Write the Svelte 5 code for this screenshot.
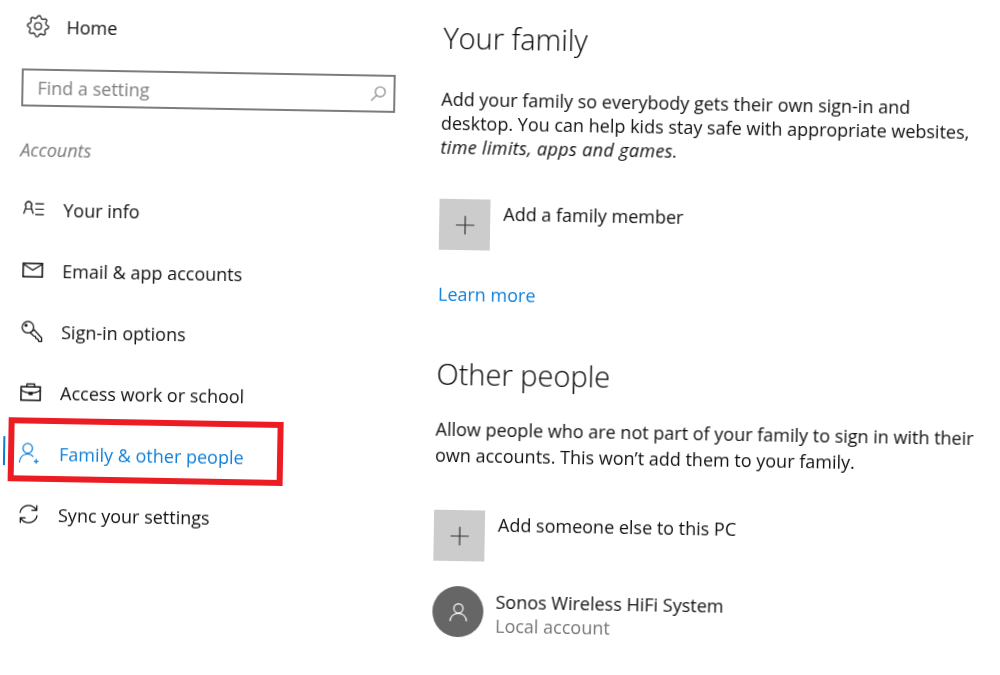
<script>
	const items = [
		{ id: 'info', label: 'Your info' },
		{ id: 'mail', label: 'Email & app accounts' },
		{ id: 'key', label: 'Sign-in options' },
		{ id: 'work', label: 'Access work or school' },
		{ id: 'family', label: 'Family & other people', active: true },
		{ id: 'sync', label: 'Sync your settings' }
	];

	// gear teeth, worked out once rather than hand-plotting 16 points
	const gear = Array.from({ length: 32 }, (_, i) => {
		const a = (i * Math.PI) / 16;
		const r = [11, 11, 8.6, 8.6][i % 4];
		return `${(12 + r * Math.cos(a)).toFixed(2)},${(12 + r * Math.sin(a)).toFixed(2)}`;
	}).join(' ');
</script>

{#snippet navIcon(id)}
	<svg class="icon" viewBox="0 0 24 24" fill="none" stroke="currentColor" stroke-width="1.3">
		{#if id === 'info'}
			<path d="M4 9.500a3.200 3.200 0 1 1 5 0L11.500 17M4 9.500L1.500 17M4 12h5" />
			<path d="M13.500 6.500h9M13.500 12h9M13.500 17.500h9" />
		{:else if id === 'mail'}
			<rect x="2" y="5" width="20" height="14" stroke-width="1.600" />
			<path d="M2.500 6l9.500 6 9.500-6" />
		{:else if id === 'key'}
			<circle cx="8" cy="8" r="6" />
			<circle cx="6" cy="6" r="1" fill="currentColor" />
			<path d="M12.500 12l2-1.500 8 8.500v3.500h-3l-1-2.500-2-.5-.5-2-2-.5-3.500-3.500" />
		{:else if id === 'work'}
			<rect x="2" y="6.500" width="20" height="14" stroke-width="1.600" />
			<path d="M8 6.500V3.500h8v3M2 10c5 4 15 4 20 0" />
			<rect x="10.500" y="12.500" width="3" height="2" fill="currentColor" />
		{:else if id === 'family'}
			<circle cx="10" cy="7" r="5" />
			<path d="M1.500 22c.5-5.500 4-9 8.500-9 2.500 0 4.500 1 6 2.800M19 18v5M16.500 20.500h5" />
		{:else}
			<path d="M3 11c.5-5 4.500-8 9-8 3.500 0 6 1.500 8 4.500M20.500 2.500v5.500h-5.500" />
			<path d="M21 13c-.5 5-4.500 8-9 8-3.500 0-6-1.500-8-4.500M3.500 21.500v-5.500h5.500" />
		{/if}
	</svg>
{/snippet}

<div class="page">
	<aside class="side">
		<div class="home">
			<svg class="icon" viewBox="0 0 24 24" fill="none" stroke="currentColor" stroke-width="1.200">
				<circle cx="12" cy="12" r="3.600" />
				<polygon points={gear} stroke-linejoin="round" />
			</svg>
			<span>Home</span>
		</div>

		<div class="search">
			<span>Find a setting</span>
			<svg viewBox="0 0 20 20" fill="none" stroke="currentColor" stroke-width="1.300">
				<circle cx="12" cy="8" r="5.500" />
				<path d="M8 12l-6 6" />
			</svg>
		</div>

		<div class="section">Accounts</div>

		<nav>
			{#each items as item}
				<div class="row" class:active={item.active}>
					{@render navIcon(item.id)}
					<span>{item.label}</span>
					{#if item.active}
						<i class="bar"></i>
						<i class="mark"></i>
					{/if}
				</div>
			{/each}
		</nav>
	</aside>

	<main class="content">
		<h2 class="family">Your family</h2>
		<p class="intro">
			Add your family so everybody gets their own sign-in and<br />
			desktop. You can help kids stay safe with appropriate websites,<br />
			<em>time limits, apps and games.</em>
		</p>
		<div class="add first">
			<div class="square">
				<svg viewBox="0 0 24 24" stroke="currentColor" stroke-width="1.300"><path d="M12 2v20M2 12h20" /></svg>
			</div>
			<span>Add a family member</span>
		</div>
		<div class="link">Learn more</div>

		<h2 class="other">Other people</h2>
		<p class="allow">
			Allow people who are not part of your family to sign in with their<br />
			own accounts. This won’t add them to your family.
		</p>
		<div class="add second">
			<div class="square">
				<svg viewBox="0 0 24 24" stroke="currentColor" stroke-width="1.300"><path d="M12 2v20M2 12h20" /></svg>
			</div>
			<span>Add someone else to this PC</span>
		</div>
		<div class="person">
			<div class="avatar">
				<svg viewBox="0 0 24 24" fill="none" stroke="currentColor" stroke-width="1.500">
					<circle cx="12" cy="8" r="5" />
					<path d="M3 22c.5-5 4-8.500 9-8.500s8.500 3.500 9 8.500" />
				</svg>
			</div>
			<div class="who">
				<div>Sonos Wireless HiFi System</div>
				<div class="sub">Local account</div>
			</div>
		</div>
	</main>
</div>

<style>
	:global(body) {
		background: #fff;
		overflow: hidden;
	}

	/* the source capture is tilted about a degree */
	.page {
		display: flex;
		width: 1000px;
		height: 675px;
		transform: rotate(1deg);
		transform-origin: 0 0;
		font-family: 'Open Sans', 'Noto Sans', sans-serif;
		font-size: 18px;
		color: #111;
		filter: blur(0.35px);
	}

	.side {
		width: 443px;
		flex: none;
		box-sizing: border-box;
		padding: 12px 0 0 23px;
	}

	.icon {
		width: 23px;
		height: 23px;
		flex: none;
	}

	.home {
		display: flex;
		align-items: center;
		gap: 17px;
		height: 27px;
		padding-left: 4px;
	}

	.search {
		display: flex;
		align-items: center;
		justify-content: space-between;
		box-sizing: border-box;
		width: 374px;
		height: 38px;
		margin-top: 29px;
		padding: 0 6px 0 14px;
		border: 2px solid #7c7c7c;
		color: #7d7d7d;
	}

	.search svg {
		width: 18px;
		height: 18px;
	}

	.section {
		margin-top: 31px;
		font-style: italic;
		color: #777;
	}

	nav {
		margin-top: 17px;
	}

	.row {
		position: relative;
		display: flex;
		align-items: center;
		gap: 18px;
		height: 61px;
		margin-left: 3px;
	}

	.row.active {
		color: #0f7fd8;
	}

	.bar {
		position: absolute;
		left: -15px;
		top: 14px;
		width: 2px;
		height: 29px;
		background: #0f78d4;
	}

	.mark {
		position: absolute;
		left: -10px;
		top: -5px;
		width: 275px;
		height: 64px;
		box-sizing: border-box;
		border: 6px solid #ec1c24;
	}

	.content {
		flex: 1;
		padding-top: 10px;
	}

	h2 {
		margin: 0;
		font-size: 29px;
		font-weight: 300;
		line-height: 40px;
		color: #000;
	}

	.family {
		margin-left: 1px;
	}

	p {
		margin: 0;
	}

	.intro {
		margin-top: 29px;
		line-height: 24px;
	}

	.intro em {
		letter-spacing: 0.35px;
	}

	.add {
		display: flex;
		gap: 13px;
	}

	.add.first {
		margin-top: 40px;
	}

	.square {
		display: flex;
		align-items: center;
		justify-content: center;
		width: 51px;
		height: 51px;
		background: #cccccc;
		color: #333;
	}

	.square svg {
		width: 22px;
		height: 22px;
	}

	.add span {
		line-height: 28px;
	}

	.link {
		margin-top: 32px;
		line-height: 24px;
		color: #0f7fd8;
	}

	.other {
		margin-top: 48px;
	}

	.allow {
		margin-top: 22px;
		line-height: 26px;
	}

	.add.second {
		margin-top: 42px;
	}

	.person {
		display: flex;
		gap: 12px;
		margin-top: 25px;
	}

	.avatar {
		display: flex;
		align-items: center;
		justify-content: center;
		width: 51px;
		height: 51px;
		border-radius: 50%;
		background: #666;
		color: #eee;
	}

	.avatar svg {
		width: 22px;
		height: 22px;
	}

	.who {
		line-height: 24px;
		padding-top: 3px;
	}

	.sub {
		color: #777;
	}
</style>
